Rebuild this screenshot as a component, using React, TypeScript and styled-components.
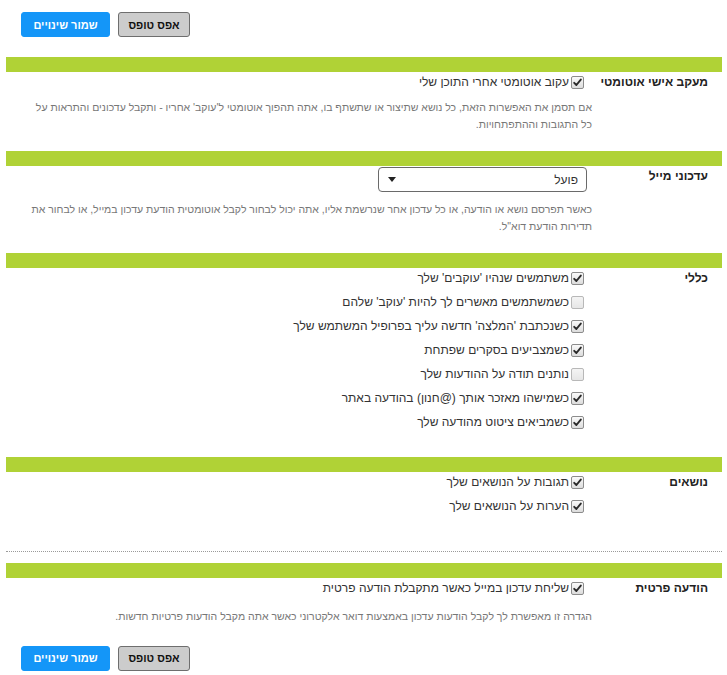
import React from "react";
import styled, { createGlobalStyle } from "styled-components";

const Global = createGlobalStyle`
  html, body { margin: 0; padding: 0; background: #fff; }
  body {
    direction: rtl;
    font-family: "Liberation Sans", "DejaVu Sans", Arial, sans-serif;
    font-size: 12px;
    color: #333;
  }
`;

const Page = styled.div`
  padding: 12px 5px 7px 6px;
`;

const ButtonBar = styled.div`
  display: flex;
  justify-content: flex-end;
  gap: 8px;
  padding-left: 15px;
  height: 25px;
`;

const Button = styled.button<{ $primary?: boolean }>`
  width: ${(p) => (p.$primary ? 89 : 72)}px;
  height: 25px;
  padding: 0;
  border-radius: 3px;
  font-family: "Liberation Sans", "DejaVu Sans", Arial, sans-serif;
  font-size: 11px;
  font-weight: bold;
  cursor: pointer;
  color: ${(p) => (p.$primary ? "#fff" : "#111")};
  background: ${(p) => (p.$primary ? "#1496f8" : "#cccccc")};
  border: 1px solid ${(p) => (p.$primary ? "#1496f8" : "#6e6e6e")};
`;

const Section = styled.section<{ $top: number; $bottom: number }>`
  margin-top: ${(p) => p.$top}px;
  padding-bottom: ${(p) => p.$bottom}px;
`;

const Bar = styled.div`
  height: 15px;
  background: #b0d236;
`;

const Row = styled.div`
  display: grid;
  grid-template-columns: 134px 1fr;
  align-items: start;
`;

const Label = styled.div`
  padding-right: 14px;
  line-height: 20px;
  font-weight: bold;
  color: #222;
`;

const Field = styled.div`
  padding-left: 24px;
  min-width: 0;
`;

const OptionList = styled.div`
  display: flex;
  flex-direction: column;
  align-items: flex-start;
  gap: 4px;
`;

const Option = styled.label`
  display: flex;
  align-items: center;
  gap: 2px;
  height: 20px;
  padding-right: 4px;
  color: #333;
  font-size: 12px;
`;

const Box = styled.span<{ $on: boolean }>`
  width: 11px;
  height: 11px;
  flex: none;
  display: flex;
  align-items: center;
  justify-content: center;
  border: 1px solid ${(p) => (p.$on ? "#8c8c8c" : "#b8b8b8")};
  border-radius: 2px;
  background: ${(p) =>
    p.$on
      ? "linear-gradient(#fafafa, #dcdcdc)"
      : "linear-gradient(#f4f4f4, #e6e6e6)"};
`;

const Desc = styled.p<{ $top: number; $lh?: number }>`
  margin: ${(p) => p.$top}px -4px 0 -20px;
  font-size: 10.5px;
  line-height: ${(p) => p.$lh ?? 16.5}px;
  color: #777;
  white-space: nowrap;
`;

const SelectWrap = styled.div`
  position: relative;
  width: 209px;
  margin-top: 1px;
  margin-right: 1px;
`;

const Select = styled.select`
  appearance: none;
  -webkit-appearance: none;
  width: 100%;
  height: 25px;
  border: 1px solid #6a6a6a;
  border-radius: 4px;
  background: #fff;
  padding: 0 8px 0 24px;
  font-family: "Liberation Sans", "DejaVu Sans", Arial, sans-serif;
  font-size: 12px;
  color: #333;
  direction: rtl;
`;

const Arrow = styled.svg`
  position: absolute;
  left: 10px;
  top: 10px;
  pointer-events: none;
`;

const Dotted = styled.hr`
  margin: 0;
  border: 0;
  border-top: 1px dotted #9a9a9a;
`;

const Check = ({ on }: { on: boolean }) => (
  <Box $on={on}>
    {on && (
      <svg width="9" height="9" viewBox="0 0 9 9">
        <path
          d="M1.2 4.8 L3.4 7 L7.8 1.6"
          fill="none"
          stroke="#2a2a2a"
          strokeWidth="1.9"
          strokeLinecap="round"
          strokeLinejoin="round"
        />
      </svg>
    )}
  </Box>
);

const Opt = ({ on, children }: { on: boolean; children: React.ReactNode }) => (
  <Option>
    <Check on={on} />
    <span>{children}</span>
  </Option>
);

const Buttons = () => (
  <ButtonBar>
    <Button>אפס טופס</Button>
    <Button $primary>שמור שינויים</Button>
  </ButtonBar>
);

const general: [boolean, string][] = [
  [true, "משתמשים שנהיו 'עוקבים' שלך"],
  [false, "כשמשתמשים מאשרים לך להיות 'עוקב' שלהם"],
  [true, "כשנכתבת 'המלצה' חדשה עליך בפרופיל המשתמש שלך"],
  [true, "כשמצביעים בסקרים שפתחת"],
  [false, "נותנים תודה על ההודעות שלך"],
  [true, "כשמישהו מאזכר אותך (@חנון) בהודעה באתר"],
  [true, "כשמביאים ציטוט מהודעה שלך"],
];

export default function App() {
  return (
    <>
      <Global />
      <Page>
        <Buttons />

        <Section $top={20} $bottom={19}>
          <Bar />
          <Row>
            <Label>מעקב אישי אוטומטי</Label>
            <Field>
              <Opt on>עקוב אוטומטי אחרי התוכן שלי</Opt>
              <Desc $top={7}>
                אם תסמן את האפשרות הזאת, כל נושא שתיצור או שתשתף בו, אתה תהפוך
                אוטומטי ל'עוקב' אחריו - ותקבל עדכונים והתראות על
                <br />
                כל התגובות וההתפתחויות.
              </Desc>
            </Field>
          </Row>
        </Section>

        <Section $top={0} $bottom={18}>
          <Bar />
          <Row>
            <Label>עדכוני מייל</Label>
            <Field>
              <SelectWrap>
                <Select defaultValue="on">
                  <option value="on">פועל</option>
                  <option value="off">כבוי</option>
                </Select>
                <Arrow width="8" height="5" viewBox="0 0 8 5">
                  <path d="M0 0 H8 L4 5 Z" fill="#222" />
                </Arrow>
              </SelectWrap>
              <Desc $top={9} $lh={17}>
                כאשר תפרסם נושא או הודעה, או כל עדכון אחר שנרשמת אליו, אתה יכול
                לבחור לקבל אוטומטית הודעת עדכון במייל, או לבחור את
                <br />
                תדירות הודעת דוא"ל.
              </Desc>
            </Field>
          </Row>
        </Section>

        <Section $top={0} $bottom={25}>
          <Bar />
          <Row>
            <Label>כללי</Label>
            <Field>
              <OptionList>
                {general.map(([on, t]) => (
                  <Opt key={t} on={on}>
                    {t}
                  </Opt>
                ))}
              </OptionList>
            </Field>
          </Row>
        </Section>

        <Section $top={0} $bottom={35}>
          <Bar />
          <Row>
            <Label>נושאים</Label>
            <Field>
              <OptionList>
                <Opt on>תגובות על הנושאים שלך</Opt>
                <Opt on>הערות על הנושאים שלך</Opt>
              </OptionList>
            </Field>
          </Row>
        </Section>

        <Dotted />

        <Section $top={11} $bottom={21}>
          <Bar />
          <Row>
            <Label>הודעה פרטית</Label>
            <Field>
              <Opt on>שליחת עדכון במייל כאשר מתקבלת הודעה פרטית</Opt>
              <Desc $top={10}>
                הגדרה זו מאפשרת לך לקבל הודעות עדכון באמצעות דואר אלקטרוני כאשר
                אתה מקבל הודעות פרטיות חדשות.
              </Desc>
            </Field>
          </Row>
        </Section>

        <Buttons />
      </Page>
    </>
  );
}
